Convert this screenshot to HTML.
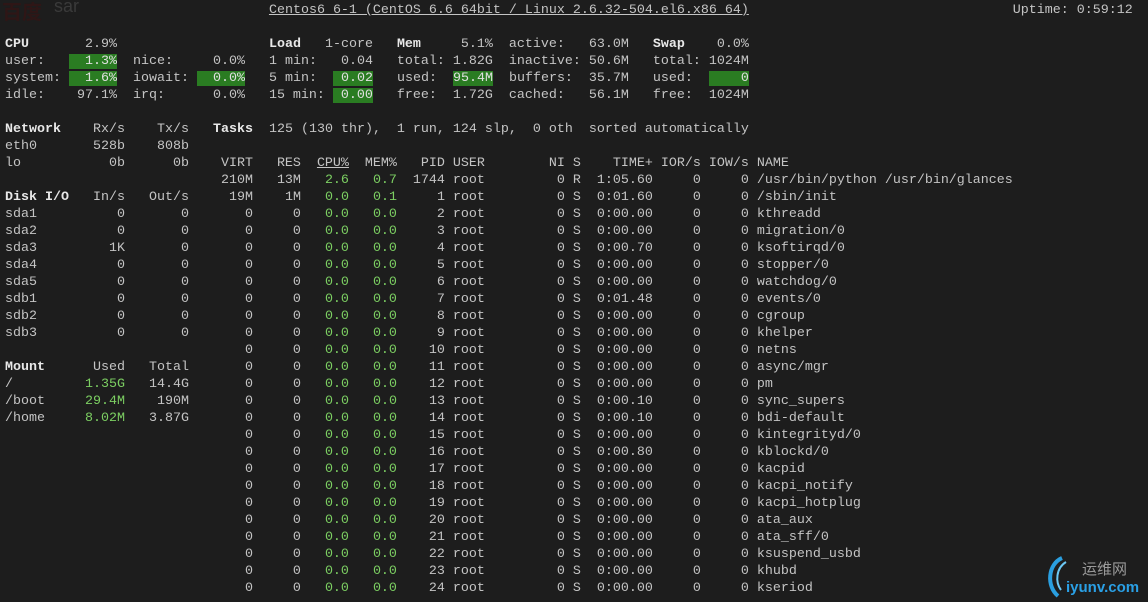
<!DOCTYPE html>
<html><head><meta charset="utf-8"><style>
html,body{margin:0;padding:0;background:#1d1d1d;width:1148px;height:602px;overflow:hidden}
pre{position:absolute;left:5px;top:2px;margin:0;font-family:"Liberation Mono",monospace;font-size:13.333px;line-height:17px;color:#c4c4c4}
b{color:#e8e8e8}
.g{color:#7ccf62}
.G{background:#2a7c22;color:#e0e0e0}
u{text-decoration:underline}
.bd{position:absolute;left:2px;top:-4px;font:bold 20px "Noto Sans CJK SC",sans-serif;color:#2e1616}
.sar{position:absolute;left:54px;top:-4px;font:18px "Liberation Sans",sans-serif;color:#3a3a3a}
.logo{position:absolute;left:1042px;top:552px;width:106px;height:50px}
</style></head><body>
<div class="bd">百度</div><div class="sar">sar</div>
<pre>                                 <u>Centos6 6-1 (CentOS 6.6 64bit / Linux 2.6.32-504.el6.x86 64)</u>                                 Uptime: 0:59:12

<b>CPU</b>       2.9%                   <b>Load</b>   1-core   <b>Mem</b>     5.1%  active:   63.0M   <b>Swap</b>    0.0%
user:   <span class="G">  1.3%</span>  nice:     0.0%   1 min:   0.04   total: 1.82G  inactive: 50.6M   total: 1024M
system: <span class="G">  1.6%</span>  iowait: <span class="G">  0.0%</span>   5 min:  <span class="G"> 0.02</span>   used:  <span class="G">95.4M</span>  buffers:  35.7M   used:  <span class="G">    0</span>
idle:    97.1%  irq:      0.0%   15 min: <span class="G"> 0.00</span>   free:  1.72G  cached:   56.1M   free:  1024M

<b>Network</b>    Rx/s    Tx/s   <b>Tasks</b>  125 (130 thr),  1 run, 124 slp,  0 oth  sorted automatically
eth0       528b    808b
lo           0b      0b    VIRT   RES  <u>CPU%</u>  MEM%   PID USER        NI S    TIME+ IOR/s IOW/s NAME
                           210M   13M   <span class="g">2.6</span>   <span class="g">0.7</span>  1744 root         0 R  1:05.60     0     0 /usr/bin/python /usr/bin/glances
<b>Disk I/O</b>   In/s   Out/s     19M    1M   <span class="g">0.0</span>   <span class="g">0.1</span>     1 root         0 S  0:01.60     0     0 /sbin/init
sda1          0       0       0     0   <span class="g">0.0</span>   <span class="g">0.0</span>     2 root         0 S  0:00.00     0     0 kthreadd
sda2          0       0       0     0   <span class="g">0.0</span>   <span class="g">0.0</span>     3 root         0 S  0:00.00     0     0 migration/0
sda3         1K       0       0     0   <span class="g">0.0</span>   <span class="g">0.0</span>     4 root         0 S  0:00.70     0     0 ksoftirqd/0
sda4          0       0       0     0   <span class="g">0.0</span>   <span class="g">0.0</span>     5 root         0 S  0:00.00     0     0 stopper/0
sda5          0       0       0     0   <span class="g">0.0</span>   <span class="g">0.0</span>     6 root         0 S  0:00.00     0     0 watchdog/0
sdb1          0       0       0     0   <span class="g">0.0</span>   <span class="g">0.0</span>     7 root         0 S  0:01.48     0     0 events/0
sdb2          0       0       0     0   <span class="g">0.0</span>   <span class="g">0.0</span>     8 root         0 S  0:00.00     0     0 cgroup
sdb3          0       0       0     0   <span class="g">0.0</span>   <span class="g">0.0</span>     9 root         0 S  0:00.00     0     0 khelper
                              0     0   <span class="g">0.0</span>   <span class="g">0.0</span>    10 root         0 S  0:00.00     0     0 netns
<b>Mount</b>      Used   Total       0     0   <span class="g">0.0</span>   <span class="g">0.0</span>    11 root         0 S  0:00.00     0     0 async/mgr
/         <span class="g">1.35G</span>   14.4G       0     0   <span class="g">0.0</span>   <span class="g">0.0</span>    12 root         0 S  0:00.00     0     0 pm
/boot     <span class="g">29.4M</span>    190M       0     0   <span class="g">0.0</span>   <span class="g">0.0</span>    13 root         0 S  0:00.10     0     0 sync_supers
/home     <span class="g">8.02M</span>   3.87G       0     0   <span class="g">0.0</span>   <span class="g">0.0</span>    14 root         0 S  0:00.10     0     0 bdi-default
                              0     0   <span class="g">0.0</span>   <span class="g">0.0</span>    15 root         0 S  0:00.00     0     0 kintegrityd/0
                              0     0   <span class="g">0.0</span>   <span class="g">0.0</span>    16 root         0 S  0:00.80     0     0 kblockd/0
                              0     0   <span class="g">0.0</span>   <span class="g">0.0</span>    17 root         0 S  0:00.00     0     0 kacpid
                              0     0   <span class="g">0.0</span>   <span class="g">0.0</span>    18 root         0 S  0:00.00     0     0 kacpi_notify
                              0     0   <span class="g">0.0</span>   <span class="g">0.0</span>    19 root         0 S  0:00.00     0     0 kacpi_hotplug
                              0     0   <span class="g">0.0</span>   <span class="g">0.0</span>    20 root         0 S  0:00.00     0     0 ata_aux
                              0     0   <span class="g">0.0</span>   <span class="g">0.0</span>    21 root         0 S  0:00.00     0     0 ata_sff/0
                              0     0   <span class="g">0.0</span>   <span class="g">0.0</span>    22 root         0 S  0:00.00     0     0 ksuspend_usbd
                              0     0   <span class="g">0.0</span>   <span class="g">0.0</span>    23 root         0 S  0:00.00     0     0 khubd
                              0     0   <span class="g">0.0</span>   <span class="g">0.0</span>    24 root         0 S  0:00.00     0     0 kseriod</pre>
<svg class="logo" viewBox="0 0 106 50">
<path d="M20 6 C6 12 4 34 16 44" fill="none" stroke="#2a9fe0" stroke-width="4"/>
<path d="M24 10 C14 16 13 30 19 38" fill="none" stroke="#6cc8f5" stroke-width="2"/>
<text x="40" y="22" font-family="Noto Sans CJK SC,sans-serif" font-size="15" fill="#9a9a9a">运维网</text>
<text x="24" y="40" font-family="Liberation Sans,sans-serif" font-weight="bold" font-size="15" fill="#2aa0e6">iyunv.com</text>
</svg>
</body></html>
